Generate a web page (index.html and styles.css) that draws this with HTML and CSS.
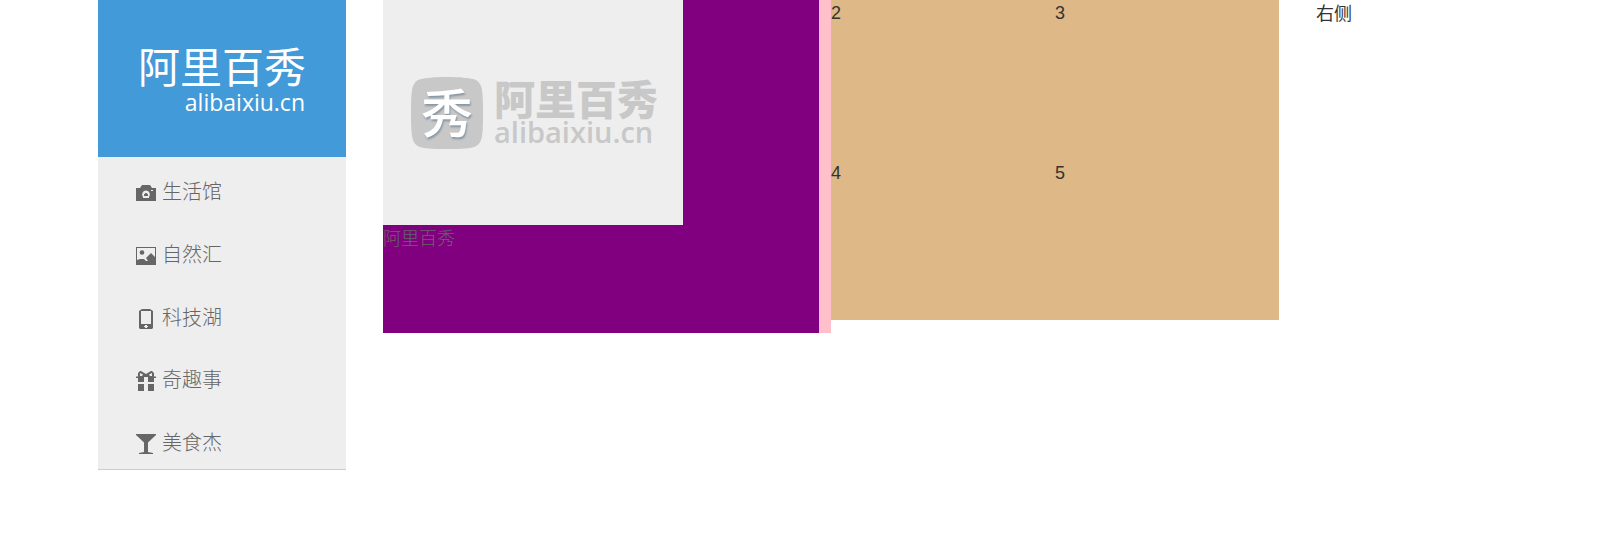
FILE: index.html
```html
<!DOCTYPE html>
<html lang="zh-CN">
<head>
<meta charset="utf-8">
<meta name="viewport" content="width=device-width, initial-scale=1">
<title>阿里百秀</title>
<link rel="stylesheet" href="styles.css">
</head>
<body>
<div class="container">
  <header class="sidebar">
    <a class="logo" href="#">
      <span class="logo-name">阿里百秀</span>
      <span class="logo-domain">alibaixiu.cn</span>
    </a>
    <nav class="nav">
      <a class="nav-link" href="#">
        <svg class="icon" viewBox="0 0 20 20" aria-hidden="true"><path fill-rule="evenodd" d="M0 5h4l2-3h8l2 3h4v13H0zM10 7.500a4 4 0 0 0-3 6.500v1h6v-1a4 4 0 0 0-3-6.500zM9.500 10h1L12 11.500V13H8v-1.500zM15 7v1h2V7z"/></svg>
        生活馆</a>
      <a class="nav-link" href="#">
        <svg class="icon" viewBox="0 0 20 20" aria-hidden="true"><path fill-rule="evenodd" d="M0 1h20v18H0zM1 2v12l3-1h4l2 2h2l-2-3 5-5 4 4V2z"/><circle cx="6" cy="6.500" r="2.300"/></svg>
        自然汇</a>
      <a class="nav-link" href="#">
        <svg class="icon" viewBox="0 0 20 20" aria-hidden="true"><path fill-rule="evenodd" d="M6 0h8l3 2v17l-1 1H4l-1-1V2zM5 2v13h10V2zM9 16v1H8v1h1v1h2v-1h1v-1h-1v-1z"/></svg>
        科技湖</a>
      <a class="nav-link" href="#">
        <svg class="icon" viewBox="0 0 20 20" aria-hidden="true"><path fill-rule="evenodd" d="M0 5.500h2V2l2-2h1l5 3 5-3h1l2 2v3.500h2V7h-2v4h-6V6h-4v5H2V7H0zM4 2v3h2l1-1.500zM16 2l-3 1.500L14 5h2z"/><path d="M2 13h6v7H2zM12 13h6v7h-6z"/></svg>
        奇趣事</a>
      <a class="nav-link" href="#">
        <svg class="icon" viewBox="0 0 20 20" aria-hidden="true"><path d="M0 0h20v1l-8 7.500V18l5 1v1H3v-1l5-1V8.500L0 1z"/></svg>
        美食杰</a>
    </nav>
  </header>
  <main class="news">
    <a class="feature" href="#">
      <span class="picture">
        <span class="badge">
          <svg class="badge-shape" viewBox="0 0 72 72" aria-hidden="true"><path d="M36 0C50 0 57 1 62 2c5 1 8 5 9 11 1 8 1 14 1 23s0 16-1 23c-1 6-3 9-8 11-7 2-17 2-27 2s-20 0-27-2c-5-2-7-5-8-11C0 52 0 45 0 36s0-15 1-23c1-6 4-10 9-11C15 1 22 0 36 0z"/></svg>
          <span class="badge-text">秀</span>
        </span>
        <span class="wordmark">
          <span class="wordmark-name">阿里百秀</span>
          <span class="wordmark-domain">alibaixiu.cn</span>
        </span>
      </span>
      <span class="caption">阿里百秀</span>
    </a>
    <div class="tiles">
      <div class="tile">2</div>
      <div class="tile">3</div>
      <div class="tile">4</div>
      <div class="tile">5</div>
    </div>
  </main>
  <aside class="aside">右侧</aside>
</div>
</body>
</html>
```
FILE: styles.css
```css
* {
  box-sizing: border-box;
}

body {
  margin: 0;
  background: #fff;
  color: #333;
  font: 18px/26px "Liberation Sans", "Noto Sans CJK SC", sans-serif;
}

a {
  color: #666;
  text-decoration: none;
}

.container {
  display: grid;
  grid-template-columns: 248fr 896fr 226fr;
  align-items: start;
  gap: 37px;
  padding: 0 73px 0 98px;
}

.sidebar {
  background: #eee;
  border-bottom: 1px solid #ccc;
}

.logo {
  display: flex;
  flex-direction: column;
  align-items: flex-end;
  height: 157px;
  padding: 42px 40px 0 0;
  background: #429ad9;
  color: #fff;
}

.logo-name {
  font: 400 42px/46px "Noto Sans CJK SC", sans-serif;
}

.logo-domain {
  padding-right: 1px;
  font: 23px/28px "Open Sans", sans-serif;
}

.nav {
  display: grid;
  align-content: space-between;
  min-height: 312px;
  padding: 20px 0 13px;
}

.nav-link {
  display: flex;
  align-items: center;
  gap: 6px;
  padding-left: 38px;
  font: 300 20px/28px "Noto Sans CJK SC", sans-serif;
}

.icon {
  width: 20px;
  height: 20px;
  margin-top: 4px;
  fill: #666;
}

.news {
  display: grid;
  grid-template-columns: 1fr 1fr;
  align-items: start;
}

.feature {
  display: block;
  height: 333px;
  background: #800080;
  border-right: 12px solid #ffc0cb;
}

.picture {
  display: flex;
  align-items: center;
  gap: 11px;
  width: 300px;
  height: 225px;
  padding-left: 28px;
  background: #eee;
}

.badge {
  display: grid;
  justify-items: center;
  width: 72px;
  height: 72px;
}

.badge-shape,
.badge-text {
  grid-area: 1 / 1;
}

.badge-shape {
  width: 72px;
  height: 72px;
  fill: #c8c8c8;
}

.badge-text {
  color: #fff;
  font: 500 52px/68px "Noto Sans CJK SC", sans-serif;
  text-shadow: 1px 2px 2px #8798a5;
}

.wordmark {
  display: flex;
  flex-direction: column;
  color: #c8c8c8;
}

.wordmark-name {
  font: 900 41px/38px "Noto Sans CJK SC", sans-serif;
}

.wordmark-domain {
  font: 600 29px/32px "Open Sans", sans-serif;
}

.caption {
  display: block;
  font: 300 18px/24px "Noto Sans CJK SC", sans-serif;
}

.tiles {
  display: grid;
  grid-template-columns: 1fr 1fr;
  grid-auto-rows: 160px;
  background: #deb887;
}

.aside {
  font: 400 18px/24px "Noto Sans CJK SC", sans-serif;
}
```
